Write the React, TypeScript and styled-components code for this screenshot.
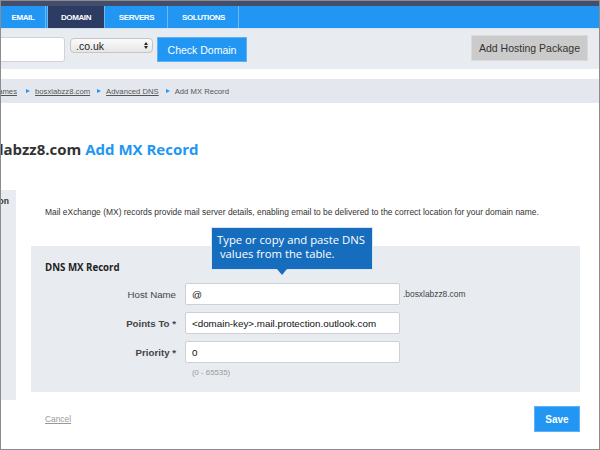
import styled, { createGlobalStyle } from 'styled-components';

const GlobalStyle = createGlobalStyle`
	html, body {
		margin: 0;
		padding: 0;
		background: #fff;
	}
	body {
		font-family: 'Liberation Sans', Arial, sans-serif;
	}
`;

const Frame = styled.div`
	width: 600px;
	height: 450px;
	box-sizing: border-box;
	border: 1px solid #8c8c8c;
	overflow: hidden;
	position: relative;
	background: #fff;
`;

const TopStrip = styled.div`
	height: 5px;
	background: #434e6e;
`;

const Nav = styled.div`
	height: 22px;
	background: #2196f3;
	display: flex;
	border-bottom: 1px solid #d6e4f2;
`;

const Tab = styled.div<{ $active?: boolean; $w: number }>`
	width: ${(p) => p.$w}px;
	display: flex;
	align-items: center;
	justify-content: center;
	color: #fff;
	font-size: 8px;
	font-weight: bold;
	letter-spacing: -0.4px;
	background: ${(p) => (p.$active ? '#2d3c63' : 'transparent')};
	border-right: 1px solid #6cb8f7;
	border-left: ${(p) => (p.$active ? '1px solid #6cb8f7' : 'none')};
	margin-right: 1px;
`;

const Toolbar = styled.div`
	height: 40px;
	background: #e8ecf0;
	display: flex;
	align-items: flex-start;
	padding-right: 11px;
`;

const DomainInput = styled.div`
	width: 80px;
	height: 25px;
	box-sizing: border-box;
	margin: 8px 0 0 -16px;
	background: #fff;
	border: 1px solid #cfd3d8;
	border-radius: 3px;
`;

const Select = styled.div`
	width: 83px;
	height: 15px;
	box-sizing: border-box;
	margin: 9px 0 0 5px;
	border: 1px solid #c6c6c6;
	border-radius: 4px;
	background: linear-gradient(#fbfbfb, #e6e6e6);
	display: flex;
	align-items: center;
	justify-content: space-between;
	padding: 0 4px 0 5px;
	font-size: 10.5px;
	color: #222;
`;

const Arrows = styled.span`
	display: flex;
	flex-direction: column;
	align-items: center;
	gap: 1px;
	&::before, &::after {
		content: '';
		width: 0;
		height: 0;
		border-left: 2.5px solid transparent;
		border-right: 2.5px solid transparent;
	}
	&::before { border-bottom: 3px solid #222; }
	&::after { border-top: 3px solid #222; }
`;

const BlueButton = styled.button<{ $bold?: boolean }>`
	background: #2196f3;
	color: #fff;
	border: 1px solid #5db2f7;
	font-family: 'Liberation Sans', Arial, sans-serif;
	font-size: ${(p) => (p.$bold ? '10px' : '10.5px')};
	font-weight: ${(p) => (p.$bold ? 'bold' : 'normal')};
	padding: 0;
	cursor: pointer;
	white-space: nowrap;
`;

const CheckButton = styled(BlueButton)`
	width: 90px;
	height: 25px;
	margin: 8px 0 0 4px;
`;

const GrayButton = styled.button`
	margin: 6px 0 0 auto;
	width: 117px;
	height: 26px;
	background: #cbcbcb;
	border: 1px solid #dadada;
	color: #333;
	font-family: 'Liberation Sans', Arial, sans-serif;
	font-size: 10.5px;
	padding: 0;
	white-space: nowrap;
`;

const Gap = styled.div`
	height: 10px;
`;

const Crumbs = styled.div`
	height: 24px;
	background: #e4e8ee;
	display: flex;
	align-items: center;
	gap: 5px;
	font-size: 7.7px;
	color: #555;
`;

const Crumb = styled.span<{ $link?: boolean }>`
	text-decoration: ${(p) => (p.$link ? 'underline' : 'none')};
	white-space: nowrap;
`;

const FirstCrumb = styled(Crumb)`
	margin-left: -37px;
	margin-right: 2px;
`;

const CrumbArrow = styled.span`
	width: 0;
	height: 0;
	margin-left: 2px;
	border-top: 2.5px solid transparent;
	border-bottom: 2.5px solid transparent;
	border-left: 4px solid #2196f3;
`;

const Heading = styled.h1`
	margin: 36px 0 0 -37px;
	font-family: 'Open Sans', 'Noto Sans', sans-serif;
	font-size: 15px;
	line-height: 20px;
	font-weight: bold;
	color: #333;
	white-space: nowrap;
	span {
		color: #2196f3;
	}
`;

const Body = styled.div`
	display: flex;
	margin-top: 31px;
	gap: 15px;
`;

const SidePanel = styled.div`
	width: 15px;
	height: 210px;
	background: #e8ecf0;
	font-size: 8.5px;
	font-weight: bold;
	color: #333;
	padding: 6px 7px 0 0;
	box-sizing: border-box;
	overflow: hidden;
	white-space: nowrap;
	display: flex;
	justify-content: flex-end;
	align-items: flex-start;
`;

const Main = styled.div`
	width: 549px;
	padding-top: 15px;
`;

const Description = styled.p`
	margin: 0 0 0 14px;
	font-size: 8.45px;
	line-height: 14px;
	color: #333;
	white-space: nowrap;
`;

const FormPanel = styled.div`
	position: relative;
	margin-top: 27px;
	background: #e8ecf0;
	padding: 15px 14px 15px;
`;

const PanelTitle = styled.div`
	font-family: 'Open Sans', 'Noto Sans', sans-serif;
	font-size: 9.7px;
	line-height: 14px;
	font-weight: bold;
	color: #222;
	margin-bottom: 8px;
`;

const Row = styled.div`
	display: flex;
	align-items: center;
	margin-bottom: 7px;
`;

const Label = styled.div<{ $required?: boolean }>`
	width: 131px;
	text-align: right;
	font-size: 9.7px;
	font-weight: ${(p) => (p.$required ? 'bold' : 'normal')};
	color: #444;
	margin-right: 9px;
`;

const Field = styled.div`
	width: 215px;
	height: 22px;
	box-sizing: border-box;
	background: #fff;
	border: 1px solid #cdd1d5;
	border-radius: 2px;
	display: flex;
	align-items: center;
	padding-left: 6px;
	font-size: 9.8px;
	color: #111;
`;

const Suffix = styled.span`
	font-size: 8.4px;
	color: #444;
	margin-left: 3px;
`;

const Hint = styled.div`
	margin: -2px 0 0 147px;
	font-size: 7.8px;
	color: #999;
`;

const Tooltip = styled.div`
	position: absolute;
	left: 180px;
	top: -19px;
	width: 162px;
	height: 43px;
	box-sizing: border-box;
	background: #166dbd;
	border: 1px solid #d7e6f5;
	color: #fff;
	font-family: 'Open Sans', 'Noto Sans', sans-serif;
	font-size: 11.3px;
	line-height: 14px;
	padding: 5px 0 0 5px;
	white-space: pre;
	&::after {
		content: '';
		position: absolute;
		left: 65px;
		bottom: -6px;
		border-left: 5px solid transparent;
		border-right: 5px solid transparent;
		border-top: 6px solid #166dbd;
	}
`;

const Actions = styled.div`
	display: flex;
	justify-content: space-between;
	align-items: center;
	margin-top: 14px;
	padding-left: 14px;
`;

const Cancel = styled.a`
	font-size: 8.4px;
	color: #999;
	text-decoration: underline;
`;

const SaveButton = styled(BlueButton)`
	width: 46px;
	height: 26px;
`;

export default function App() {
	return (
		<Frame>
			<GlobalStyle />
			<TopStrip />
			<Nav>
				<Tab $w={44}>EMAIL</Tab>
				<Tab $w={56} $active>DOMAIN</Tab>
				<Tab $w={61}>SERVERS</Tab>
				<Tab $w={69}>SOLUTIONS</Tab>
			</Nav>
			<Toolbar>
				<DomainInput />
				<Select>
					.co.uk
					<Arrows />
				</Select>
				<CheckButton>Check Domain</CheckButton>
				<GrayButton>Add Hosting Package</GrayButton>
			</Toolbar>
			<Gap />
			<Crumbs>
				<FirstCrumb $link>Domain Names</FirstCrumb>
				<CrumbArrow />
				<Crumb $link>bosxlabzz8.com</Crumb>
				<CrumbArrow />
				<Crumb $link>Advanced DNS</Crumb>
				<CrumbArrow />
				<Crumb>Add MX Record</Crumb>
			</Crumbs>
			<Heading>
				bosxlabzz8.com <span>Add MX Record</span>
			</Heading>
			<Body>
				<SidePanel>Domain Information</SidePanel>
				<Main>
					<Description>
						Mail eXchange (MX) records provide mail server details, enabling email to be delivered to the correct location for your domain name.
					</Description>
					<FormPanel>
						<Tooltip>{'Type or copy and paste DNS\n values from the table.'}</Tooltip>
						<PanelTitle>DNS MX Record</PanelTitle>
						<Row>
							<Label>Host Name</Label>
							<Field>@</Field>
							<Suffix>.bosxlabzz8.com</Suffix>
						</Row>
						<Row>
							<Label $required>Points To *</Label>
							<Field>&lt;domain-key&gt;.mail.protection.outlook.com</Field>
						</Row>
						<Row>
							<Label $required>Priority *</Label>
							<Field>0</Field>
						</Row>
						<Hint>(0 - 65535)</Hint>
					</FormPanel>
					<Actions>
						<Cancel>Cancel</Cancel>
						<SaveButton $bold>Save</SaveButton>
					</Actions>
				</Main>
			</Body>
		</Frame>
	);
}
